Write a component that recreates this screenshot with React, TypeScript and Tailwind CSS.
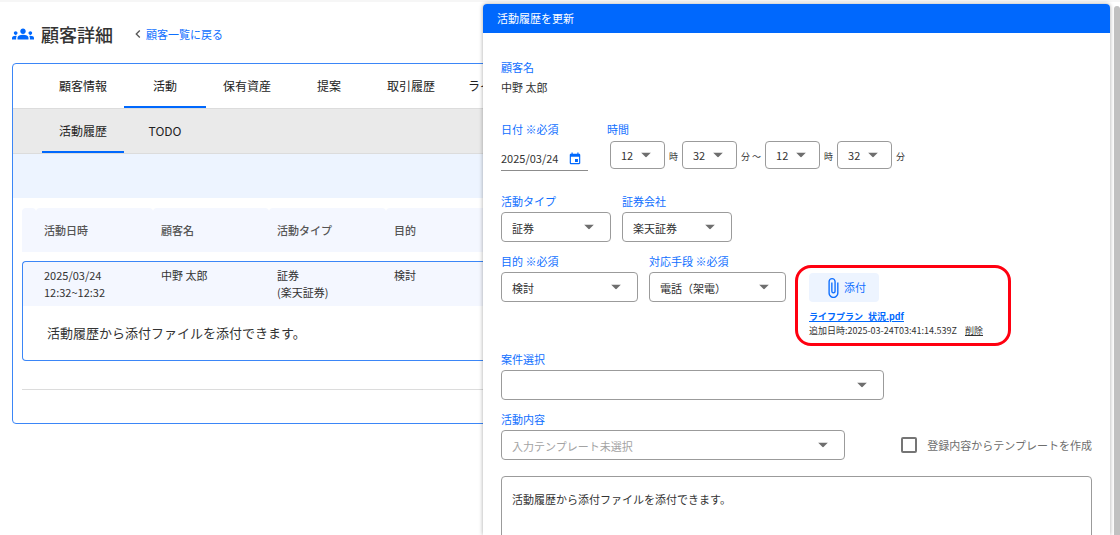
import { useState } from "react";
import type { ReactNode } from "react";
import { MdAttachFile, MdChevronLeft, MdEvent, MdGroups } from "react-icons/md";

type SelectProps = {
  id: string;
  label: string;
  value: string;
  width: string;
  small?: boolean;
  muted?: boolean;
};

function Select({ id, label, value, width, small, muted }: SelectProps) {
  return (
    <div className={`min-w-0 ${width}`}>
      {!small && (
        <label htmlFor={id} className="mb-[3px] block whitespace-nowrap leading-4 text-[#0f6fff]">
          {label}
        </label>
      )}
      <div className="relative">
        <select
          id={id}
          aria-label={small ? label : undefined}
          defaultValue={value}
          className={`block w-full appearance-none rounded border border-[#9b9b9b] bg-white pl-2.5 ${
            small ? "h-7 pr-5" : "h-[30px] pr-8 pt-0.5"
          } ${muted ? "text-[#a3a3a3]" : "text-[#333]"}`}
        >
          <option value={value}>{value}</option>
        </select>
        <svg
          viewBox="0 0 10 5"
          aria-hidden="true"
          className={`pointer-events-none absolute top-1/2 h-[5px] w-2.5 -translate-y-1/2 fill-[#6e6e6e] ${
            small ? "right-3.5" : "right-[17px]"
          }`}
        >
          <path d="M0 0h10L5 5z" />
        </svg>
      </div>
    </div>
  );
}

function Tab({ children, active }: { children: ReactNode; active?: boolean }) {
  return (
    <button
      type="button"
      role="tab"
      aria-selected={!!active}
      className={`h-11 min-w-[82px] shrink-0 whitespace-nowrap border-b-2 px-4 pt-0.5 text-xs text-[#222] ${
        active ? "border-[#0068fd]" : "border-transparent"
      }`}
    >
      {children}
    </button>
  );
}

function Unit({ children }: { children: ReactNode }) {
  return <span className="whitespace-pre pt-1 text-[9px] text-[#333]">{children}</span>;
}

function CustomerPage() {
  const headCell = "rounded-t bg-[#f4f7ff] px-2 text-left font-medium text-[#555]";
  const cell = "border-t border-[#3b86f7] bg-[#f4f7ff] px-2 py-[5px] align-top leading-[17px]";
  return (
    <main className="px-3 pt-[18px]">
      <header className="flex h-7 items-center">
        <MdGroups className="size-[22px] text-[#0068fd]" />
        <h1 className="ml-[7px] text-lg font-medium leading-7 text-[#333]">顧客詳細</h1>
        <a href="#customers" className="ml-[17px] flex items-center text-[#0f6fff]">
          <MdChevronLeft className="size-4 text-[#555]" />
          顧客一覧に戻る
        </a>
      </header>

      <section className="mt-[15px] overflow-hidden rounded border border-[#3b86f7] pb-[33px]">
        <div role="tablist" className="flex border-b border-[#dcdcdc] pl-[29px]">
          <Tab>顧客情報</Tab>
          <Tab active>活動</Tab>
          <Tab>保有資産</Tab>
          <Tab>提案</Tab>
          <Tab>取引履歴</Tab>
          <Tab>ライフプラン</Tab>
        </div>
        <div role="tablist" className="flex border-b border-[#dcdcdc] bg-[#eaeaea] pl-[29px]">
          <Tab active>活動履歴</Tab>
          <Tab>TODO</Tab>
        </div>
        <div className="h-11 bg-[#edf4ff]" />

        <div className="px-[9px] pt-2.5">
          <div className="border-b border-[#dcdcdc] pb-7">
            <table className="w-full table-fixed border-separate border-spacing-0">
              <thead>
                <tr className="h-11">
                  <td className="w-3.5 rounded-t bg-[#f4f7ff]" />
                  <th className={`w-[117px] ${headCell}`}>活動日時</th>
                  <th className={`w-[116px] ${headCell}`}>顧客名</th>
                  <th className={`w-[117px] ${headCell}`}>活動タイプ</th>
                  <th className={headCell}>目的</th>
                </tr>
              </thead>
              <tbody className="text-[#333]">
                <tr className="h-[9px]">
                  <td colSpan={5} />
                </tr>
                <tr>
                  <td className="rounded-tl border-l border-t border-[#3b86f7] bg-[#f4f7ff]" />
                  <td className={cell}>
                    2025/03/24
                    <br />
                    12:32~12:32
                  </td>
                  <td className={cell}>中野 太郎</td>
                  <td className={cell}>
                    証券
                    <br />
                    (楽天証券)
                  </td>
                  <td className={`${cell} rounded-tr border-r`}>検討</td>
                </tr>
                <tr>
                  <td
                    colSpan={5}
                    className="h-[55px] rounded-b border-x border-b border-[#3b86f7] px-6 text-[13px]"
                  >
                    活動履歴から添付ファイルを添付できます。
                  </td>
                </tr>
              </tbody>
            </table>
          </div>
        </div>
      </section>
    </main>
  );
}

function Attachment() {
  return (
    <div className="relative ml-3 text-[9px] text-[#333]">
      <div className="pointer-events-none absolute -bottom-2 -left-3.5 -right-7 -top-2 rounded-2xl border-[3px] border-[#ff0010]" />
      <button
        type="button"
        className="flex h-[29px] items-center rounded bg-[#edf4ff] px-[13px] text-[11px] text-[#0f6fff]"
      >
        <MdAttachFile className="size-[22px]" />
        添付
      </button>
      <a href="#file" className="mt-2 block font-bold leading-[14px] text-[#0068fd] underline">
        ライフプラン_状況.pdf
      </a>
      <div className="flex gap-2 whitespace-nowrap leading-[14px]">
        <span>追加日時:2025-03-24T03:41:14.539Z</span>
        <button type="button" className="underline">
          削除
        </button>
      </div>
    </div>
  );
}

function ActivityPanel() {
  const [body, setBody] = useState("活動履歴から添付ファイルを添付できます。");
  const [asTemplate, setAsTemplate] = useState(false);
  return (
    <div
      role="dialog"
      aria-labelledby="panel-title"
      className="absolute bottom-0 left-[483px] right-2.5 top-1 overflow-hidden rounded-t bg-white shadow-[0_0_4px_rgba(0,0,0,0.35)]"
    >
      <h2 id="panel-title" className="bg-[#0068fd] px-3.5 py-1.5 leading-[17px] text-white">
        活動履歴を更新
      </h2>
      <form className="px-[18px] pt-[26px]">
        <div className="leading-4 text-[#0f6fff]">顧客名</div>
        <div className="mt-1 leading-4 text-[#333]">中野 太郎</div>

        <div className="mt-[26px] flex gap-[19px]">
          <div className="w-[87px]">
            <label htmlFor="date" className="block leading-4 text-[#0f6fff]">
              日付 ※必須
            </label>
            <div className="mt-2 flex h-[26px] items-center border-b border-[#8c8c8c] pt-0.5">
              <input id="date" defaultValue="2025/03/24" className="w-[67px] text-[#333] outline-none" />
              <button type="button" aria-label="日付を選択">
                <MdEvent className="size-3.5 text-[#0068fd]" />
              </button>
            </div>
          </div>
          <fieldset>
            <legend className="leading-4 text-[#0f6fff]">時間</legend>
            <div className="mt-1 flex items-center gap-1 pl-[3px]">
              <Select id="h1" label="開始 時" value="12" width="w-[55px]" small />
              <Unit>時</Unit>
              <Select id="m1" label="開始 分" value="32" width="w-[55px]" small />
              <Unit>分 ～</Unit>
              <Select id="h2" label="終了 時" value="12" width="w-[55px]" small />
              <Unit>時</Unit>
              <Select id="m2" label="終了 分" value="32" width="w-[55px]" small />
              <Unit>分</Unit>
            </div>
          </fieldset>
        </div>

        <div className="mt-[22px] flex gap-[11px]">
          <Select id="type" label="活動タイプ" value="証券" width="w-[110px]" />
          <Select id="company" label="証券会社" value="楽天証券" width="w-[110px]" />
        </div>

        <div className="mt-[11px] flex items-start gap-[11px]">
          <Select id="purpose" label="目的 ※必須" value="検討" width="w-[137px]" />
          <Select id="means" label="対応手段 ※必須" value="電話（架電）" width="w-[137px]" />
          <div className="pt-5">
            <Attachment />
          </div>
        </div>

        <div className="mt-[13px]">
          <Select id="case" label="案件選択" value="" width="w-[383px]" />
        </div>

        <div className="mt-[11px] flex items-end justify-between">
          <Select id="template" label="活動内容" value="入力テンプレート未選択" width="w-[344px]" muted />
          <label className="flex h-[30px] items-center gap-2.5 whitespace-nowrap text-[#6e6e6e]">
            <input
              type="checkbox"
              checked={asTemplate}
              onChange={(e) => setAsTemplate(e.target.checked)}
              className="size-4 appearance-none rounded-xs border-2 border-[#757575] checked:bg-[#0068fd]"
            />
            登録内容からテンプレートを作成
          </label>
        </div>

        <textarea
          aria-label="活動内容の本文"
          value={body}
          onChange={(e) => setBody(e.target.value)}
          className="mt-4 block h-28 w-full resize-none rounded border border-[#9b9b9b] px-2.5 py-3.5 leading-4 text-[#333]"
        />
      </form>
    </div>
  );
}

export default function App() {
  return (
    <div className="relative h-screen overflow-hidden bg-white font-['Noto_Sans_CJK_JP','Noto_Sans',sans-serif] text-[11px]">
      <div className="h-0.5 bg-[#f6f6f6]" />
      <CustomerPage />
      <ActivityPanel />
      <div className="absolute bottom-0 right-0 top-1.5 w-1.5 rounded-t bg-[#c1c1c1]" />
    </div>
  );
}
